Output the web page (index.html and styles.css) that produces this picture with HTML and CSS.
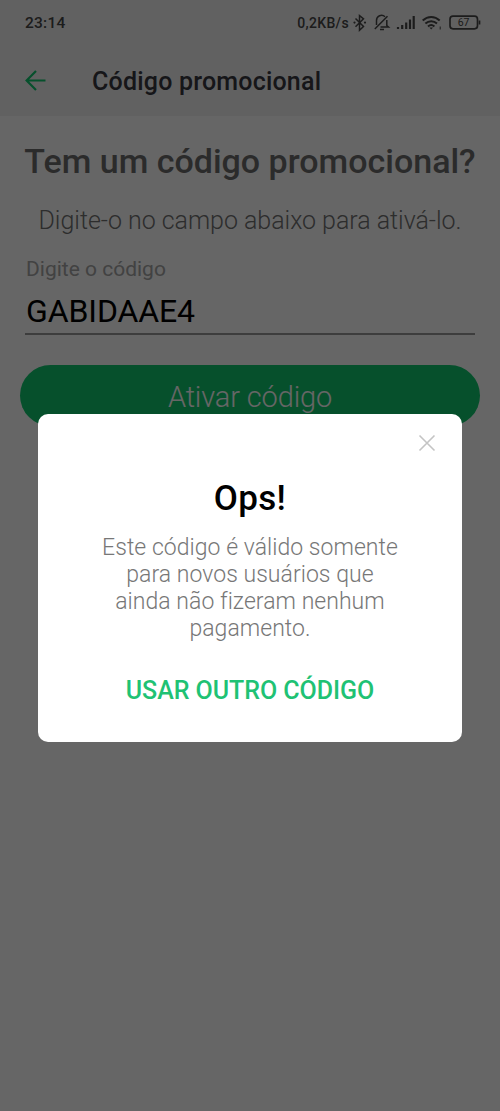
FILE: index.html
```html
<!DOCTYPE html>
<html lang="pt-BR">
<head>
<meta charset="utf-8">
<title>Código promocional</title>
<link rel="stylesheet" href="styles.css">
</head>
<body>
<div class="screen">
  <div class="status-bar">
    <span class="clock">23:14</span>
    <span class="rate">0,2KB/s</span>
    <svg class="status-icons" width="132" height="21" viewBox="0 0 132 21" fill="none" stroke="currentColor">
      <path d="M5.500 6.500l8 8-4 3.700V3.500l4 3.300-8 8" stroke-width="1.500"/>
      <g fill="currentColor" stroke="none"><circle cx="4.500" cy="10.600" r="1.100"/><circle cx="15" cy="10.600" r="1.100"/></g>
      <g stroke-width="1.500">
        <path d="M26.500 13V8.500a5 5 0 0 1 8.500-3.700M36.800 8v5.500l1.700 1.500h-8M30 17.500h4M24.800 17L37.500 4.200"/>
      </g>
      <g stroke-width="2.200">
        <path d="M48 17v-2M52.200 17v-4M56.200 17v-6.500M60 17V7.500M63.700 17V4"/>
      </g>
      <g stroke-width="2">
        <path d="M72.700 8.600c5-4.700 12-4.700 17 0M75.400 11.600c3.400-3.200 8.200-3.200 11.600 0M78 14.400c1.900-1.700 4.500-1.700 6.400 0"/>
      </g>
      <path d="M79.400 15.400h3.600l-1.800 2.200z" fill="currentColor" stroke="none"/>
      <path d="M90.200 14.500v3" stroke-width="1"/>
      <rect x="100" y="4.200" width="27.500" height="12.600" rx="3" stroke-width="1.700"/>
      <path d="M129.500 8.500v4" stroke-width="1.700"/>
      <text class="battery-level" x="113.600" y="14.300" text-anchor="middle">67</text>
    </svg>
  </div>
  <header class="app-bar">
    <svg class="back" width="22" height="22" viewBox="0 0 22 22" fill="none" stroke="currentColor" stroke-width="2.200"><path d="M20.500 10.500H2M11 1L1.600 10.500l9.400 9.500"/></svg>
    <h1 class="app-title">Código promocional</h1>
  </header>
  <main class="content">
    <h2 class="headline">Tem um código promocional?</h2>
    <p class="lead">Digite-o no campo abaixo para ativá-lo.</p>
    <div class="field">
      <div class="label">Digite o código</div>
      <div class="value">GABIDAAE4</div>
    </div>
    <div class="submit">Ativar código</div>
  </main>
</div>
<div class="scrim">
  <section class="dialog">
    <svg class="close" width="18" height="18" viewBox="0 0 18 18" fill="none" stroke="currentColor" stroke-width="1.600"><path d="M1.500 1.500l15 15M16.500 1.500l-15 15"/></svg>
    <h3 class="dialog-title">Ops!</h3>
    <p class="message">Este código é válido somente<br>para novos usuários que<br>ainda não fizeram nenhum<br>pagamento.</p>
    <div class="action">USAR OUTRO CÓDIGO</div>
  </section>
</div>
</body>
</html>
```
FILE: styles.css
```css
* { box-sizing: border-box; }
body {
  margin: 0;
  height: 1111px;
  overflow: hidden;
  background: #fff;
  font-family: Roboto, sans-serif;
  white-space: nowrap;
}
h1, h2, h3, p { margin: 0; font-weight: 500; }
.screen { height: 1111px; }
.status-bar {
  display: flex;
  align-items: center;
  height: 45px;
  padding: 0 18px 0 25px;
  background: #f3f3f3;
  color: #484848;
}
.clock { font-size: 15.500px; font-weight: 500; letter-spacing: .25px; }
.rate { margin-left: auto; margin-right: 1px; font-size: 14px; font-weight: 500; letter-spacing: .35px; }
.status-icons { flex: none; }
.battery-level { font-size: 10.500px; font-weight: 400; fill: currentColor; stroke: none; }
.app-bar {
  display: flex;
  align-items: center;
  height: 71px;
  padding: 0 25px;
  background: #f3f3f3;
}
.back { color: #11c76f; }
.app-title { margin-left: 45px; padding-top: 2px; font-size: 25px; letter-spacing: .2px; color: #37383f; line-height: 71px; }
.content { padding: 0 20px; text-align: center; }
.headline { padding-top: 22px; font-size: 34px; line-height: 46px; color: #6c6c6c; }
.lead { margin-top: 19px; font-size: 25px; font-weight: 300; line-height: 36px; letter-spacing: -.03px; color: #707070; }
.field { margin: 16px 5px 0; height: 80px; border-bottom: 2px solid #989898; text-align: left; }
.label { padding-left: 1px; font-size: 21px; line-height: 28px; color: #a5a5a5; }
.value { margin-top: 6px; padding-left: 1px; font-size: 32px; line-height: 44px; letter-spacing: -.1px; color: #000; }
.submit {
  margin-top: 30px;
  height: 61px;
  border-radius: 31px;
  background: #11c76f;
  color: #fff;
  font-size: 29px;
  font-weight: 300;
  letter-spacing: -.15px;
  line-height: 65px;
}
.scrim {
  position: absolute;
  inset: 0;
  display: flex;
  align-items: flex-start;
  justify-content: center;
  padding-top: 414px;
  background: rgba(0, 0, 0, .6);
}
.dialog {
  display: flex;
  flex-direction: column;
  align-items: center;
  width: 424px;
  height: 328px;
  padding: 20px 26px 0;
  border-radius: 10px;
  background: #fff;
  text-align: center;
}
.close { align-self: flex-end; color: #c4c4c4; }
.dialog-title { margin-top: 23px; font-size: 35px; line-height: 48px; letter-spacing: .3px; color: #000; }
.message { margin-top: 11px; font-size: 23px; font-weight: 300; line-height: 27px; letter-spacing: .04px; color: #777; }
.action { margin-top: 31px; font-size: 25px; font-weight: 500; line-height: 36px; letter-spacing: -.05px; color: #1fc274; }
```
